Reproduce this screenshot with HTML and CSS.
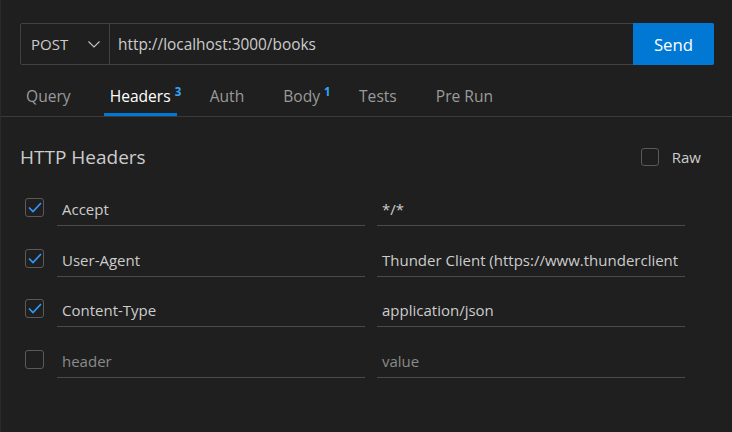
FILE: index.html
```html
<!DOCTYPE html>
<html>
<head>
<meta charset="utf-8">
<link rel="stylesheet" href="styles.css">
</head>
<body>
<div class="panel">
  <div class="urlbar">
    <div class="method">
      <span class="method-text">POST</span>
      <svg class="chev" width="12" height="7" viewBox="0 0 12 7"><path d="M0.5 0.5 L6 6 L11.5 0.5" fill="none" stroke="#c5c5c5" stroke-width="1.1"/></svg>
    </div>
    <div class="url">http://localhost:3000/books</div>
    <button class="send">Send</button>
  </div>

  <div class="tabs">
    <div class="tab">Query</div>
    <div class="tab active">Headers<span class="badge">3</span></div>
    <div class="tab">Auth</div>
    <div class="tab">Body<span class="badge">1</span></div>
    <div class="tab">Tests</div>
    <div class="tab">Pre Run</div>
  </div>

  <div class="section-head">
    <div class="title">HTTP Headers</div>
    <label class="raw"><span class="box"></span><span class="raw-text">Raw</span></label>
  </div>

  <div class="rows">
    <div class="row">
      <span class="box checked"><svg width="14" height="11" viewBox="0 0 14 11"><path d="M1 5.5 L5 9.5 L13 1" fill="none" stroke="#2f9bff" stroke-width="1.6"/></svg></span>
      <div class="field key">Accept</div>
      <div class="field val">*/*</div>
    </div>
    <div class="row">
      <span class="box checked"><svg width="14" height="11" viewBox="0 0 14 11"><path d="M1 5.5 L5 9.5 L13 1" fill="none" stroke="#2f9bff" stroke-width="1.6"/></svg></span>
      <div class="field key">User-Agent</div>
      <div class="field val">Thunder Client (https://www.thunderclient</div>
    </div>
    <div class="row">
      <span class="box checked"><svg width="14" height="11" viewBox="0 0 14 11"><path d="M1 5.5 L5 9.5 L13 1" fill="none" stroke="#2f9bff" stroke-width="1.6"/></svg></span>
      <div class="field key">Content-Type</div>
      <div class="field val">application/json</div>
    </div>
    <div class="row">
      <span class="box"></span>
      <div class="field key placeholder">header</div>
      <div class="field val placeholder">value</div>
    </div>
  </div>
</div>
</body>
</html>
```

FILE: styles.css
```css
* { box-sizing: border-box; }
html, body {
  margin: 0;
  padding: 0;
  background: #1f1f1f;
  width: 732px;
  height: 432px;
  overflow: hidden;
}
body {
  font-family: "Open Sans", "Noto Sans", sans-serif;
  color: #cccccc;
}
.panel {
  height: 432px;
  border-left: 1px solid #2b2b2b;
  padding: 23px 18px 0 19px;
}
.urlbar {
  display: flex;
  height: 42px;
  border: 1px solid #414141;
  border-radius: 2px;
}
.method {
  width: 89px;
  display: flex;
  align-items: center;
  padding-left: 10px;
  border-right: 1px solid #414141;
}
.method-text {
  font-size: 15px;
  color: #cccccc;
}
.chev { margin-left: 20px; }
.url {
  flex: 1;
  display: flex;
  align-items: center;
  padding-left: 8px;
  font-size: 15.4px;
  color: #cccccc;
}
.send {
  width: 81px;
  margin: -1px -1px -1px 0;
  border: none;
  border-radius: 0 2px 2px 0;
  background: #0078d4;
  color: #ffffff;
  font-family: inherit;
  font-size: 16.8px;
}
.tabs {
  display: flex;
  gap: 27px;
  height: 52px;
  border-bottom: 1px solid #3a3a3a;
  margin: 0 -18px 0 -19px;
  padding-left: 19px;
}
.tab {
  position: relative;
  padding: 13px 6px 0;
  display: flex;
  align-items: center;
  font-size: 15.6px;
  color: #9a9a9a;
  border-bottom: 3px solid transparent;
}
.tab.active {
  color: #ffffff;
  border-bottom-color: #0078d4;
}
.badge {
  position: absolute;
  left: 100%;
  top: 19px;
  margin-left: -2px;
  font-size: 11.5px;
  font-weight: 700;
  color: #36a3f7;
}
.section-head {
  display: flex;
  align-items: center;
  justify-content: space-between;
  margin-top: 27px;
  height: 26px;
  padding-right: 13px;
}
.title {
  font-size: 19px;
  color: #cccccc;
}
.raw {
  display: flex;
  align-items: center;
  gap: 13px;
  font-size: 15px;
}
.box {
  width: 18px;
  height: 18px;
  border: 1px solid #5a5a5a;
  border-radius: 3px;
  display: flex;
  align-items: center;
  justify-content: center;
  flex-shrink: 0;
}
.rows {
  margin-top: 24px;
  display: flex;
  flex-direction: column;
  gap: 18.67px;
}
.row {
  display: flex;
  align-items: flex-start;
  padding-left: 5px;
}
.row .box { width: 19px; height: 19px; margin-top: 4px; }
.field {
  width: 308px;
  height: 32px;
  border-bottom: 1px solid #4a4a4a;
  font-size: 15px;
  color: #cccccc;
  padding: 0 0 1px 5px;
  display: flex;
  align-items: center;
  white-space: nowrap;
  overflow: hidden;
}
.key { margin-left: 13px; }
.val { margin-left: 12px; }
.placeholder { color: #8a8a8a; }
```
